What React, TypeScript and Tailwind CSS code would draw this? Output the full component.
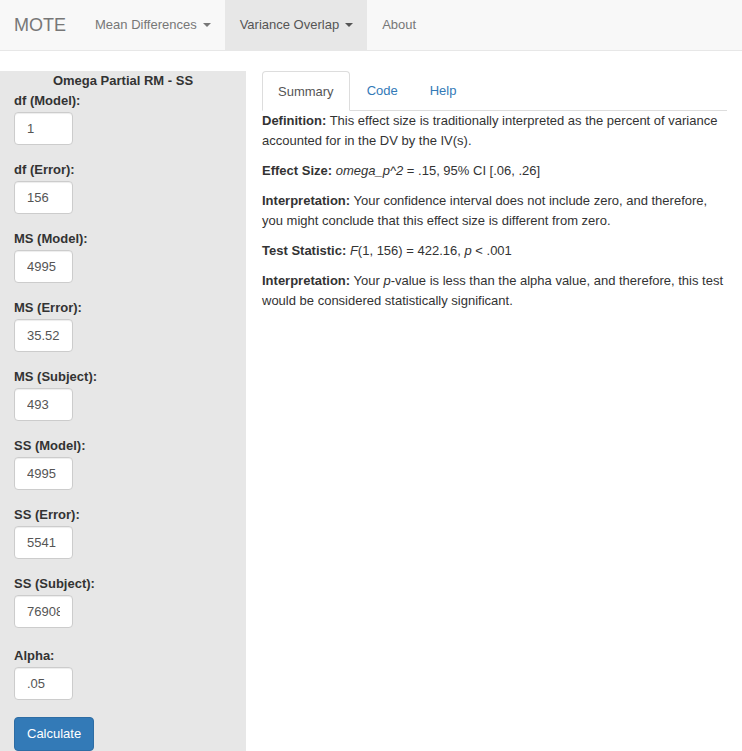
import React from 'react';

const fields: { label: string; value: string; extra?: boolean }[] = [
  { label: 'df (Model):', value: '1' },
  { label: 'df (Error):', value: '156' },
  { label: 'MS (Model):', value: '4995' },
  { label: 'MS (Error):', value: '35.52' },
  { label: 'MS (Subject):', value: '493' },
  { label: 'SS (Model):', value: '4995' },
  { label: 'SS (Error):', value: '5541' },
  { label: 'SS (Subject):', value: '76908' },
  { label: 'Alpha:', value: '.05', extra: true },
];

function Caret() {
  return <span className="inline-block h-0 w-0 border-x-[4px] border-t-[4px] border-x-transparent border-t-current align-middle" />;
}

function NavBar() {
  return (
    <nav className="flex h-[51px] border-b border-[#e7e7e7] bg-[#f8f8f8] text-[13px] leading-5">
      <span className="px-[14px] py-[15px] text-[18px] leading-5 text-[#777]">MOTE</span>
      <span className="flex items-center gap-[6px] pl-[15px] pr-[14px] text-[#777]">
        Mean Differences <Caret />
      </span>
      <span className="flex items-center gap-[6px] bg-[#e7e7e7] pl-[15px] pr-[14px] text-[#555]">
        Variance Overlap <Caret />
      </span>
      <span className="flex items-center px-[15px] text-[#777]">About</span>
    </nav>
  );
}

function Sidebar() {
  return (
    <aside className="w-[246px] shrink-0 bg-[#e7e7e7] pl-[14px] text-[13px] leading-5 text-[#333]">
      <h4 className="pr-[14px] text-center font-bold">Omega Partial RM - SS</h4>
      {fields.map((f) => (
        <div key={f.label} className={f.extra ? 'mb-[15px] pt-[3px]' : 'mb-[15px]'}>
          <label className="mb-px block font-bold">{f.label}</label>
          <input
            readOnly
            defaultValue={f.value}
            className="h-[33px] w-[59px] rounded-[4px] border border-[#ccc] bg-white px-[12px] text-[13px] text-[#555] shadow-[inset_0_1px_1px_rgba(0,0,0,0.075)] outline-none"
          />
        </div>
      ))}
      <button className="mt-[2px] h-[34px] rounded-[4px] border border-[#2e6da4] bg-[#337ab7] px-[12px] text-[13px] text-white">
        Calculate
      </button>
    </aside>
  );
}

function Main() {
  return (
    <main className="ml-[16px] w-[465px] text-[13px] leading-5 text-[#333]">
      <ul className="flex h-[40px] border-b border-[#ddd]">
        <li className="-mb-px mr-[2px] rounded-t-[4px] border border-b-transparent border-[#ddd] bg-white px-[15px] py-[10px] text-[#555]">
          Summary
        </li>
        <li className="mr-[2px] px-[15px] py-[10px] text-[#337ab7]">Code</li>
        <li className="px-[15px] py-[10px] text-[#337ab7]">Help</li>
      </ul>
      <div className="pr-[2px]">
        <p className="mb-[10px]">
          <b>Definition:</b> This effect size is traditionally interpreted as the percent of variance accounted for in the DV by the IV(s).
        </p>
        <p className="mb-[10px]">
          <b>Effect Size:</b> <i>omega_p^2</i> = .15, 95% CI [.06, .26]
        </p>
        <p className="mb-[10px]">
          <b>Interpretation:</b> Your confidence interval does not include zero, and therefore, you might conclude that this effect size is different from zero.
        </p>
        <p className="mb-[10px]">
          <b>Test Statistic:</b> <i>F</i>(1, 156) = 422.16, <i>p</i> &lt; .001
        </p>
        <p className="mb-[10px]">
          <b>Interpretation:</b> Your <i>p</i>-value is less than the alpha value, and therefore, this test would be considered statistically significant.
        </p>
      </div>
    </main>
  );
}

export default function App() {
  return (
    <div className="h-[751px] overflow-hidden bg-white font-['Liberation_Sans',Arial,sans-serif]">
      <NavBar />
      <div className="mt-[20px] flex">
        <Sidebar />
        <Main />
      </div>
    </div>
  );
}
